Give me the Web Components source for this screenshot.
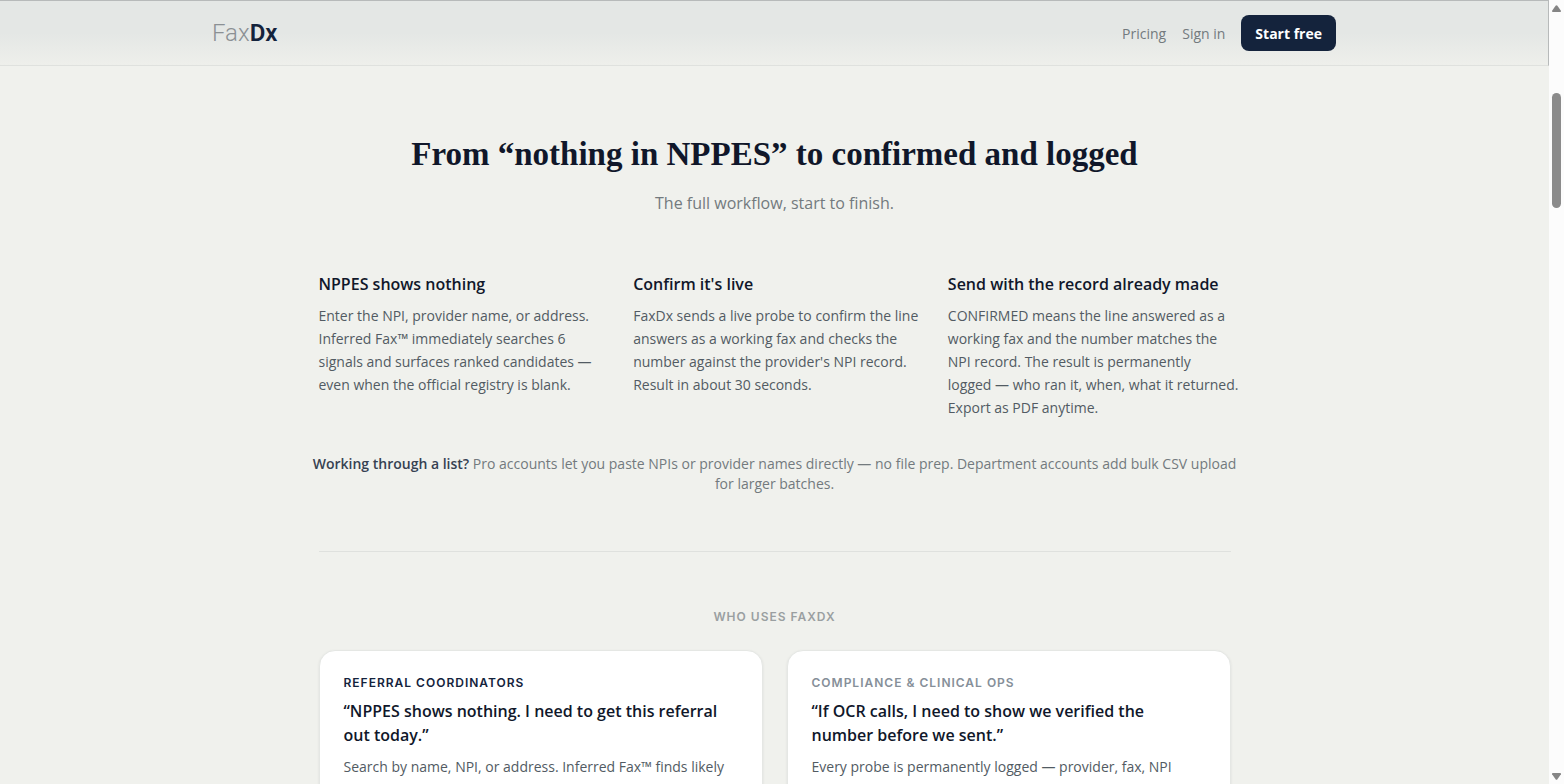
<!DOCTYPE html>
<html lang="en">
<head>
<meta charset="utf-8">
<title>FaxDx</title>
<meta name="viewport" content="width=device-width, initial-scale=1">
<style>
  body {
    margin: 0;
    background: #f0f1ed;
    color: #10172a;
    font-family: "Open Sans", "Noto Sans", sans-serif;
    font-size: 14px;
    --ink: #10172a;
    --navy: #14233c;
    --body: #525b63;
    --muted: #737a7e;
    --faint: #9a9fa1;
    --line: #dfe1de;
    --serif: "Liberation Serif", serif;
    --label: 600 12px/16px "Inter", sans-serif;
  }
</style>
</head>
<body>
<fax-page></fax-page>

<template id="fax-page">
  <style>
    :host { display: grid; grid-template-columns: minmax(0, 1fr) 15px; height: 100vh; overflow: hidden; }
    .view { overflow: hidden; }
    main { max-width: 912px; margin: 0 auto; padding: 68px 24px 0; }
    h2 { margin: 0; text-align: center; font: bold 33px/40px var(--serif); color: var(--ink); }
    .sub { margin: 17px 0 0; text-align: center; font-size: 16px; line-height: 24px; color: var(--muted); }
    .steps { display: grid; grid-template-columns: repeat(3, minmax(0, 1fr)); gap: 32px; margin-top: 57px; }
    .note { margin: 35px -8px 0; text-align: center; line-height: 20px; color: var(--muted); }
    .note strong { font-weight: 600; color: #364152; }
    hr { margin: 57px 0 0; border: 0; border-top: 1px solid var(--line); }
    .eyebrow { margin: 57px 0 0; text-align: center; font: var(--label); letter-spacing: 1px; text-transform: uppercase; color: var(--faint); }
    .cards { display: grid; grid-template-columns: repeat(2, minmax(0, 1fr)); gap: 24px; margin-top: 25px; }
    @media (max-width: 960px) {
      .note { margin-inline: 0; }
      .steps, .cards { grid-template-columns: minmax(0, 1fr); }
    }
  </style>
  <div class="view">
    <fax-header></fax-header>
    <main>
      <h2>From “nothing in NPPES” to confirmed and logged</h2>
      <p class="sub">The full workflow, start to finish.</p>
      <section class="steps">
        <fax-step><span slot="title">NPPES shows nothing</span>Enter the NPI, provider name, or address. Inferred Fax™ immediately searches 6 signals and surfaces ranked candidates — even when the official registry is blank.</fax-step>
        <fax-step><span slot="title">Confirm it's live</span>FaxDx sends a live probe to confirm the line<br>answers as a working fax and checks the<br>number against the provider's NPI record.<br>Result in about 30 seconds.</fax-step>
        <fax-step><span slot="title">Send with the record already made</span>CONFIRMED means the line answered as a<br>working fax and the number matches the<br>NPI record. The result is permanently<br>logged — who ran it, when, what it returned.<br>Export as PDF anytime.</fax-step>
      </section>
      <p class="note"><strong>Working through a list?</strong> Pro accounts let you paste NPIs or provider names directly — no file prep. Department accounts add bulk CSV upload for larger batches.</p>
      <hr>
      <p class="eyebrow">Who uses FaxDx</p>
      <section class="cards">
        <fax-card tone="primary"><span slot="role">Referral coordinators</span><span slot="quote">“NPPES shows nothing. I need to get this referral out today.”</span>Search by name, NPI, or address. Inferred Fax™ finds likely</fax-card>
        <fax-card><span slot="role">Compliance &amp; clinical ops</span><span slot="quote">“If OCR calls, I need to show we verified the number before we sent.”</span>Every probe is permanently logged — provider, fax, NPI</fax-card>
      </section>
    </main>
  </div>
  <fax-scrollbar></fax-scrollbar>
</template>

<template id="fax-header">
  <style>
    :host { display: block; border-top: 1px solid #b7baba; border-bottom: 1px solid var(--line); border-right: 1px solid #b7baba; background: linear-gradient(#e4e7e5 50%, #eeefeb); }
    .bar { box-sizing: border-box; max-width: 1172px; margin: 0 auto; padding: 14px 24px; display: flex; align-items: center; justify-content: space-between; }
    a { text-decoration: none; color: var(--muted); }
    .logo { font-family: Roboto, sans-serif; font-size: 24px; line-height: 36px; font-weight: 300; color: #8b9094; }
    .logo b { font-weight: 600; color: var(--navy); }
    nav { display: flex; align-items: center; gap: 16px; }
    button { height: 36px; padding: 0 14px; border: 0; border-radius: 8px; background: var(--navy); color: #fff; font: inherit; font-weight: 700; }
  </style>
  <header class="bar">
    <a class="logo" href="#">Fax<b>Dx</b></a>
    <nav><a href="#pricing">Pricing</a><a href="#signin">Sign in</a><button type="button">Start free</button></nav>
  </header>
</template>

<template id="fax-step">
  <style>
    :host { display: block; }
    h3 { margin: 0; font-size: 16px; line-height: 24px; font-weight: 600; color: var(--ink); }
    p { margin: 8px -8px 0 0; line-height: 23px; color: var(--body); }
  </style>
  <h3><slot name="title"></slot></h3>
  <p><slot></slot></p>
</template>

<template id="fax-card">
  <style>
    :host { display: block; padding: 24px; border: 1px solid #e5e7e4; border-radius: 16px; background: #fff; box-shadow: 0 1px 3px rgba(16, 23, 42, .08); }
    .role { margin: 0; font: var(--label); letter-spacing: 1px; text-transform: uppercase; color: #868f99; }
    :host([tone="primary"]) .role { color: var(--navy); }
    h3 { margin: 8px 0 0; font-size: 16px; line-height: 24px; font-weight: 600; color: var(--ink); }
    .text { margin: 8px 0 0; line-height: 23px; color: var(--body); }
  </style>
  <p class="role"><slot name="role"></slot></p>
  <h3><slot name="quote"></slot></h3>
  <p class="text"><slot></slot></p>
</template>

<template id="fax-scrollbar">
  <style>
    :host { display: flex; flex-direction: column; align-items: center; background: #fcfcfc; padding: 4px 0 3px; box-sizing: border-box; }
    svg { width: 11px; height: 9px; fill: #858585; flex: none; }
    .track { flex: 1; display: grid; grid-template-rows: 11fr 16fr 78fr; width: 9px; }
    .thumb { grid-row: 2; border-radius: 5px; background: #8b8b8b; }
  </style>
  <svg viewBox="0 0 12 9" aria-hidden="true"><path d="M5 1.6Q6 .4 7 1.6L10.8 7Q11.2 8.3 10 8.4H2Q.8 8.3 1.2 7Z"/></svg>
  <div class="track"><div class="thumb"></div></div>
  <svg viewBox="0 0 12 9" aria-hidden="true"><path d="M5 7.4Q6 8.6 7 7.4L10.8 2Q11.2.7 10 .6H2Q.8.7 1.2 2Z"/></svg>
</template>

<script>
  for (const name of ["fax-header", "fax-step", "fax-card", "fax-scrollbar", "fax-page"]) {
    customElements.define(name, class extends HTMLElement {
      constructor() {
        super();
        this.attachShadow({ mode: "open" }).append(document.getElementById(name).content.cloneNode(true));
      }
    });
  }
</script>
</body>
</html>
